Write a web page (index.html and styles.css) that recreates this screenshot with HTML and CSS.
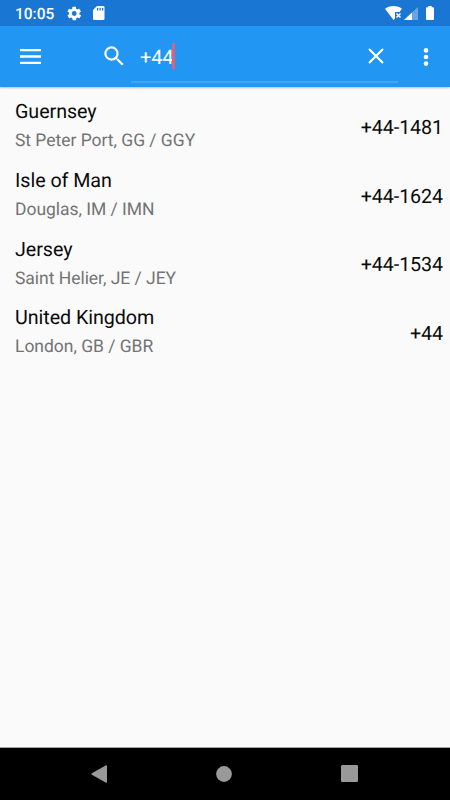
FILE: index.html
```html
<!DOCTYPE html>
<html lang="en">
	<head>
		<meta charset="utf-8">
		<title>Calling codes</title>
		<meta name="viewport" content="width=device-width">
		<link rel="stylesheet" href="styles.css">
	</head>
	<body>
		<div class="screen">
			<div class="status-bar">
				<span class="clock">10:05</span>
				<svg class="icon-gear" width="16.500" height="17" viewBox="0 0 24 24"><path d="M19.4 13c.1-.3.1-.7.1-1s0-.7-.1-1l2.1-1.600c.2-.2.3-.4.100-.6l-2-3.500c-.1-.2-.4-.3-.6-.2l-2.500 1c-.5-.4-1.100-.7-1.700-1l-.4-2.600c0-.2-.2-.4-.5-.4h-4c-.2 0-.5.2-.5.4l-.4 2.600c-.6.3-1.200.6-1.700 1l-2.500-1c-.2-.1-.5 0-.6.2l-2 3.500c-.1.2-.1.5.1.6L4.600 11c0 .3-.1.700-.1 1s0 .7.100 1l-2.100 1.600c-.2.2-.2.400-.1.600l2 3.500c.1.2.4.3.6.2l2.500-1c.5.4 1.100.7 1.700 1l.4 2.600c0 .2.2.4.5.4h4c.2 0 .5-.2.5-.4l.4-2.600c.6-.3 1.200-.6 1.700-1l2.500 1c.2.1.5 0 .6-.2l2-3.500c.1-.2.1-.5-.1-.6zM12 15.500a3.500 3.500 0 1 1 0-7 3.500 3.500 0 0 1 0 7z"/></svg>
				<svg class="icon-card" width="12" height="14" viewBox="0 0 12 14"><path fill-rule="evenodd" d="M4 0h6.200Q11.500 0 11.500 1.300v11.400Q11.500 14 10.200 14H1.300Q0 14 0 12.700V4zM4 2v2.500h1.300V2zM6.500 2v2.500h1.300V2zM9 2v2.500h1.300V2z"/></svg>
				<svg class="icon-wifi" width="17" height="14" viewBox="0 0 17 14"><path d="M0 2.800C4.500-.8 12.500-.8 17 2.800L14.500 6H10v6.500L8.500 14z"/><path class="line" d="M11.500 7.500l4 4M15.500 7.500l-4 4"/></svg>
				<svg class="icon-signal" width="14" height="13" viewBox="0 0 14 13"><path class="faded" d="M14 0v13H0z"/><path d="M8 5.600V13H0z"/></svg>
				<svg class="icon-battery" width="8" height="14" viewBox="0 0 8 14"><path d="M2.200 0h3.600v1.300H7q1 0 1 1V13q0 1-1 1H1q-1 0-1-1V2.300q0-1 1-1h1.200z"/></svg>
			</div>

			<header class="toolbar">
				<svg class="icon-menu" width="21" height="15" viewBox="0 0 21 15"><path d="M0 0h21v2.300H0zM0 6.350h21v2.300H0zM0 12.700h21V15H0z"/></svg>
				<svg class="icon-search" width="26.500" height="26.500" viewBox="0 0 24 24"><path d="M15.500 14h-.79l-.28-.27A6.471 6.471 0 0 0 16 9.500 6.500 6.500 0 1 0 9.500 16c1.610 0 3.090-.59 4.230-1.570l.27.28v.79l5 4.990L20.490 19l-4.990-5zm-6 0C7.010 14 5 11.990 5 9.500S7.010 5 9.500 5 14 7.010 14 9.500 11.990 14 9.500 14z"/></svg>
				<div class="search-field">
					<span class="query">+44</span>
					<span class="caret"></span>
					<svg class="icon-clear" width="16" height="16" viewBox="0 0 16 16"><path d="M1 1l14 14M15 1L1 15"/></svg>
				</div>
				<svg class="icon-more" width="6" height="18" viewBox="0 0 6 18"><circle cx="3" cy="2.400" r="2.300"/><circle cx="3" cy="9" r="2.300"/><circle cx="3" cy="15.600" r="2.300"/></svg>
			</header>

			<ul class="countries">
				<li class="country">
					<div>
						<div class="name">Guernsey</div>
						<div class="detail">St Peter Port, GG / GGY</div>
					</div>
					<span class="code">+44-1481</span>
				</li>
				<li class="country">
					<div>
						<div class="name">Isle of Man</div>
						<div class="detail">Douglas, IM / IMN</div>
					</div>
					<span class="code">+44-1624</span>
				</li>
				<li class="country">
					<div>
						<div class="name">Jersey</div>
						<div class="detail">Saint Helier, JE / JEY</div>
					</div>
					<span class="code">+44-1534</span>
				</li>
				<li class="country">
					<div>
						<div class="name">United Kingdom</div>
						<div class="detail">London, GB / GBR</div>
					</div>
					<span class="code">+44</span>
				</li>
			</ul>

			<div class="nav-bar">
				<svg width="16" height="18" viewBox="0 0 16 18"><path d="M15 .3Q16 0 16 1v16q0 1-1 .7L.5 9.500Q0 9 .5 8.500z"/></svg>
				<svg width="16" height="16" viewBox="0 0 16 16"><circle cx="8" cy="8" r="7.900"/></svg>
				<svg width="17" height="17" viewBox="0 0 17 17"><rect width="17" height="17" rx="1.200"/></svg>
			</div>
		</div>
	</body>
</html>
```
FILE: styles.css
```css
html, body {
	margin: 0;
	height: 100%;
}

body {
	background-color: #FAFAFA;
	color: #0A0A0A;
	font-family: Roboto, "Liberation Sans", sans-serif;
	text-rendering: geometricPrecision;
}

svg {
	display: block;
	flex: none;
	fill: #FFFFFF;
}

.screen {
	display: flex;
	flex-direction: column;
	height: 800px;
	width: 450px;
	overflow: hidden;
}

/* status bar */
.status-bar {
	box-sizing: border-box;
	display: flex;
	align-items: center;
	height: 26px;
	padding: 0 16px 0 15px;
	background-color: #1976D2;
	color: #FFFFFF;
}

.clock {
	width: 51px;
	padding-top: 2px;
	font-size: 15.5px;
	font-weight: 500;
	line-height: 26px;
}

.icon-card {
	margin-left: 10px;
}

.icon-wifi {
	margin-left: auto;
}

.icon-wifi .line {
	fill: none;
	stroke: #FFFFFF;
	stroke-width: 1.5;
}

.icon-signal {
	margin-left: 2px;
}

.icon-signal .faded {
	fill: rgba(255, 255, 255, 0.35);
}

.icon-battery {
	margin-left: 8px;
}

/* toolbar */
.toolbar {
	display: flex;
	align-items: center;
	height: 61px;
	padding: 0 21px 0 20px;
	background-color: #2196F3;
	box-shadow: 0 1px 2px rgba(0, 0, 0, 0.25);
	color: #FFFFFF;
}

.icon-search {
	margin-left: 60px;
}

.search-field {
	box-sizing: border-box;
	display: flex;
	align-items: center;
	width: 267px;
	height: 52px;
	margin-left: 3.5px;
	padding: 0 14px 0 9px;
	border-bottom: 2px solid #41A5F5;
}

.query {
	padding-top: 2px;
	font-size: 20px;
	line-height: 26px;
	letter-spacing: -0.2px;
}

.caret {
	width: 3px;
	height: 26px;
	margin-left: -1px;
	background-color: #D9637F;
}

.icon-clear {
	margin-left: auto;
	stroke: #FFFFFF;
	stroke-width: 2.1;
}

.icon-more {
	margin-left: auto;
}

/* results */
.countries {
	flex: 1;
	margin: 0;
	padding: 6px 7px 0 15px;
	list-style: none;
}

.country {
	display: flex;
	align-items: center;
	justify-content: space-between;
	height: 68.7px;
}

.name {
	font-size: 19.7px;
	line-height: 29px;
	letter-spacing: -0.05px;
}

.detail {
	color: #737373;
	font-size: 17.5px;
	line-height: 31px;
	letter-spacing: -0.03px;
}

.code {
	font-size: 19.7px;
	letter-spacing: -0.1px;
}

/* system navigation */
.nav-bar {
	box-sizing: border-box;
	display: flex;
	align-items: center;
	justify-content: space-between;
	height: 53px;
	padding: 0 92px 1px 91px;
	border-top: 1px solid #A8A8A8;
	background-color: #000000;
}

.nav-bar svg {
	fill: #999999;
}
```
